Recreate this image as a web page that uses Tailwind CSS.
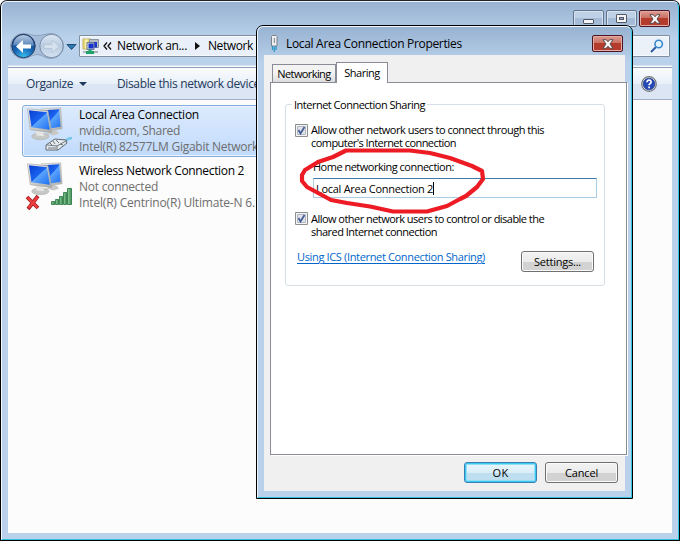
<!DOCTYPE html>
<html lang="en">
<head>
<meta charset="utf-8">
<title>Network Connections</title>
<script src="https://cdn.jsdelivr.net/npm/@tailwindcss/browser@4"></script>
</head>
<body class="w-[681px] h-[544px] overflow-hidden bg-white relative whitespace-nowrap font-['Open_Sans','Noto_Sans',sans-serif] text-[12px] leading-4 text-black">

<svg class="absolute w-0 h-0">
  <defs>
    <linearGradient id="scr" x1="0" y1="0" x2="1" y2="1"><stop offset="0" stop-color="#0a3fd0"/><stop offset=".48" stop-color="#1a63f0"/><stop offset=".5" stop-color="#5aa4fb"/><stop offset="1" stop-color="#1f6ff2"/></linearGradient>
    <linearGradient id="bezel" x1="0" y1="0" x2="1" y2="1"><stop offset="0" stop-color="#f5f5f3"/><stop offset="1" stop-color="#a9aba8"/></linearGradient>
    <radialGradient id="back" cx=".5" cy="1" r=".9"><stop offset="0" stop-color="#3cc5f5"/><stop offset=".5" stop-color="#1766b4"/><stop offset="1" stop-color="#153f86"/></radialGradient>
    <linearGradient id="gloss" x1="0" y1="0" x2="0" y2="1"><stop offset="0" stop-color="#d5e2f1"/><stop offset="1" stop-color="#5d87bd"/></linearGradient>
    <linearGradient id="fwd" x1="0" y1="0" x2="0" y2="1"><stop offset="0" stop-color="#dce7f3"/><stop offset=".5" stop-color="#b9cbe0"/><stop offset="1" stop-color="#d5e4f3"/></linearGradient>
    <linearGradient id="bar" x1="0" y1="0" x2="1" y2="0"><stop offset="0" stop-color="#8fce9d"/><stop offset="1" stop-color="#3d9152"/></linearGradient>
    <symbol id="monitors" viewBox="0 0 40 34">
      <path d="M27 23l4 1 3 3-6 2-8-2z" fill="#c9cac8"/>
      <path d="M15 1L35.500 0 37 22 19 25z" fill="url(#bezel)" stroke="#b0b2b0" stroke-width=".6"/>
      <path d="M17 2.500L34 1.500 35.300 20 20 22.500z" fill="url(#scr)"/>
      <ellipse cx="14" cy="30" rx="9" ry="3.500" fill="#c6c8c6" stroke="#aaaca9" stroke-width=".6"/>
      <path d="M9 24l8 1 1 5-8-1z" fill="#e5e5e3"/>
      <path d="M0.500 1L22 3 26 26 3.500 23z" fill="url(#bezel)" stroke="#a5a7a5" stroke-width=".7"/>
      <path d="M2 2.500L21 4.500 24 23 4.700 20.500z" fill="url(#scr)"/>
    </symbol>
    <symbol id="close" viewBox="0 0 12 10">
      <path d="M1 .7h3.200L6 2.800 7.800.700H11L8 5l3 4.300H7.800L6 7.200 4.200 9.300H1L4 5z" fill="#f7f7f7" stroke="#5b4a50" stroke-width="1"/>
    </symbol>
    <symbol id="check" viewBox="0 0 13 13">
      <path d="M.5.500h12v12H.5z" fill="#f4f4f4" stroke="#8e8f8f"/><path d="M2.500 2.500h8v8h-8z" fill="#dfe3e9" stroke="#b3bac3"/><path d="M3.500 6l2 3.500L9.500 3" fill="none" stroke="#4a5f97" stroke-width="1.800"/>
    </symbol>
  </defs>
</svg>

<!-- Explorer window -->
<div class="w-[680px] h-[541px] border border-t-[#20242a] border-black rounded-t-[7px] bg-[#b9d1ea] overflow-hidden">
  <div class="w-full h-full border border-t-[#eef4fa] border-l-[#f5fafd] border-r-[#2fc8e8] border-b-[#2fc0dc] rounded-t-[6px] bg-linear-to-b from-[#98b2d2] to-[#b9d1ea] to-[36px] flex flex-col pl-[6px] pr-[6px] pb-[6px]">
    <!-- caption buttons -->
    <div class="flex justify-end h-[31px] pt-[8px] pr-[2px] gap-[2px] shrink-0">
      <div class="w-[31px] h-[17px] rounded-[2px] border border-[#62758c] shadow-[inset_0_0_0_1px_#d5e2f0] bg-linear-to-b from-[#bfd1e5] from-50% to-[#a4bcd8] to-50% flex justify-center pt-[8px]"><span class="block w-[11px] h-[5px] rounded-[1px] border border-[#535766] bg-[#f4f4f4]"></span></div>
      <div class="w-[31px] h-[17px] rounded-[2px] border border-[#62758c] shadow-[inset_0_0_0_1px_#d5e2f0] bg-linear-to-b from-[#bfd1e5] from-50% to-[#a4bcd8] to-50% flex justify-center pt-[3px]"><span class="w-[11px] h-[9px] rounded-[1px] border border-[#535766] bg-[#f4f4f4] flex items-center justify-center"><i class="block w-[5px] h-[3px] border border-[#535766] bg-[#8da8c6]"></i></span></div>
      <div class="w-[31px] h-[17px] rounded-[2px] border border-[#4b1523] shadow-[inset_0_0_0_1px_#e5aca5] bg-linear-to-b from-[#dc9b91] from-0% via-[#ca7264] via-45% to-[#b33c2c] to-50% flex justify-center items-center"><svg class="w-[12px] h-[10px]"><use href="#close"/></svg></div>
    </div>
    <!-- navigation row -->
    <div class="flex h-[32px] shrink-0">
      <svg class="w-[71px] h-[30px] shrink-0" viewBox="8 33 71 30">
        <path d="M23 33.500c5 0 8 2 14 2s9-2 14-2a12.500 12.500 0 0 1 0 25c-6 0-9-4-14-4s-8 4-14 4a12.500 12.500 0 0 1 0-25z" fill="#a5bdd9" stroke="#8ba3c0" stroke-width="1"/>
        <circle cx="23.500" cy="46" r="11.700" fill="url(#back)" stroke="#293f62" stroke-width="1"/>
        <path d="M13 45.500a10.500 10.500 0 0 1 21 0c-6 2-14-2-21 0z" fill="url(#gloss)" opacity=".85"/>
        <path d="M16 46.500l7-6.500v4.500h8v4h-8V53z" fill="#fff"/>
        <circle cx="51.500" cy="46" r="11.700" fill="url(#fwd)" stroke="#788ca6" stroke-width="1"/>
        <path d="M59 46.500l-7-6.500v4.500h-8v4h8V53z" fill="#d5e1ed" stroke="#b4c5d8" stroke-width=".8"/>
        <path d="M67 44.500h9l-4.500 5z" fill="#2e7cb4" stroke="#1d4b78" stroke-width="1"/>
      </svg>
      <div class="w-[540px] h-[22px] mt-[2px] border border-[#828f9f] rounded-[1px] bg-[#e9f0f9] shadow-[inset_0_0_0_1px_#f6f9fd] flex items-center">
        <svg class="w-[17px] h-[17px] ml-[2px] shrink-0" viewBox="0 0 17 17">
          <path d="M1 1h8v10H1z" fill="#e7d778" stroke="#c6b863" stroke-width="1"/><path d="M3 1.500h3v9H3z" fill="#f8f0a5"/>
          <path d="M7.500 1.500h9v8h-9z" fill="#b8bec6" stroke="#8a929c"/><path d="M9 4h6v5.500H9z" fill="#1d36cf"/>
          <path d="M5 4.500h7v7H5z" fill="#dce2e9" stroke="#69758c"/><path d="M6.500 5.500h5v5h-5z" fill="#1530cb"/><path d="M6 13h10v2H6z" fill="#c5c9ce"/>
          <path d="M1 14h15" stroke="#a3a8a8" stroke-width="1.500"/><path d="M8 11.500v3M4 14.500h8" stroke="#1fa16c" stroke-width="3"/>
        </svg>
        <svg class="w-[9px] h-[8px] ml-[4px] mt-[-1px] shrink-0" viewBox="0 0 9 8"><path d="M4 .5L1 4l3 3.500M8 .5L5 4l3 3.500" fill="none" stroke="#111" stroke-width="1.300"/></svg>
        <span class="ml-[5px] tracking-[-0.34px]">Network an...</span>
        <svg class="w-[5px] h-[8px] ml-[8px] shrink-0" viewBox="0 0 5 8"><path d="M0 0l5 4-5 4z" fill="#111"/></svg>
        <span class="ml-[8px] tracking-[-0.4px]">Network</span>
      </div>
      <div class="w-[51px] h-[22px] mt-[2px] border border-[#828f9f] rounded-[1px] bg-[#eaf1f9] shadow-[inset_0_0_0_1px_#f6f9fd] flex justify-end items-center pr-[5px]">
        <svg class="w-[14px] h-[14px]" viewBox="0 0 14 14"><path d="M1 13l5-5" stroke="#2d5c9e" stroke-width="2"/><circle cx="8.700" cy="5" r="3.700" fill="#e3f3fd" stroke="#3c86cc" stroke-width="1.600"/></svg>
      </div>
    </div>
    <!-- body -->
    <div class="flex-1 min-h-0 bg-[#fcfcfc] flex flex-col border-t border-[#d5e2f0]">
      <div class="h-[33px] shrink-0 border-y border-t-[#8d9eb6] border-b-[#a0b0c8] mt-px bg-linear-to-b from-[#fafcfe] from-0% via-[#e9f0f9] via-50% to-[#dbe5f3] to-52% flex items-center text-[#1e395b] pl-[18px] pr-[15px]">
        <span class="tracking-[-0.4px]">Organize</span>
        <svg class="w-[8px] h-[4px] ml-[6px] shrink-0" viewBox="0 0 8 4"><path d="M0 0h8L4 4z" fill="#1e395b"/></svg>
        <span class="ml-[30px] tracking-[-0.36px]">Disable this network device</span>
        <svg class="w-[16px] h-[16px] ml-auto shrink-0" viewBox="0 0 16 16"><circle cx="8" cy="8" r="7.300" fill="#dfe1e6" stroke="#74777f" stroke-width="1.200"/><circle cx="8" cy="8" r="5.800" fill="#2549b5" stroke="#132b78" stroke-width=".6"/><path d="M5.900 6.300c.1-3 4.400-2.600 4.200-.1-.1 1.500-2 1.500-2 3.100M8.100 10.500v1.800" fill="none" stroke="#fff" stroke-width="1.700"/></svg>
      </div>
      <div class="flex flex-col pl-[14px] pt-[5px]">
        <div class="w-[300px] h-[52px] border border-[#84acdd] rounded-[3px] bg-linear-to-b from-[#dceafc] to-[#c1dbfc] shadow-[inset_0_0_0_1px_#e9f2fd] flex">
          <svg class="w-[48px] h-[48px] ml-[3px] mt-[1px] shrink-0" viewBox="26 107 48 48">
            <use href="#monitors" x="27" y="107" width="38" height="34"/>
            <path d="M64 141c3 0 3-3 8-3" stroke="#75c8e7" stroke-width="2.500" fill="none"/>
            <path d="M46 145l9-6 11 1 1 3-9 7-12 0z" fill="#e6eaec" stroke="#5f6a72" stroke-width="1"/>
            <path d="M47 145l10 1 9-5M57 146v4M50 143l2 2M53 141l2 3M56 140l3 3M48 148h8M60 144l3 1" stroke="#6d7981" stroke-width="1" fill="none"/>
          </svg>
          <div class="ml-[5px] mt-px text-[#6d6d6d]">
            <div class="text-black tracking-[-0.235px]">Local Area Connection</div>
            <div class="tracking-[-0.3px]">nvidia.com, Shared</div>
            <div class="tracking-[-0.26px]">Intel(R) 82577LM Gigabit Network</div>
          </div>
        </div>
        <div class="h-[56px] pt-[5px] flex">
          <svg class="w-[49px] h-[50px] ml-[3px] shrink-0" viewBox="25 163 49 50">
            <use href="#monitors" x="27" y="163" width="38" height="34"/>
            <path d="M27 198l11 11M38 197L28 210" stroke="#a41b22" stroke-width="3.800"/><path d="M27.500 198.500l10 10M37.500 198L28.500 209" stroke="#ee3e3e" stroke-width="2.300"/>
            <g fill="url(#bar)" stroke="#337c49" stroke-width=".9"><path d="M51.500 202.500h3v3h-3z"/><path d="M55.500 200.500h3v5h-3z"/><path d="M59.500 197.500h3v8h-3z"/><path d="M63.500 193.500h3v12h-3z"/><path d="M67.500 189.500h4v16h-4z"/></g>
          </svg>
          <div class="ml-[5px] mt-px text-[#6d6d6d]">
            <div class="text-black tracking-[-0.34px]">Wireless Network Connection 2</div>
            <div class="tracking-[-0.245px]">Not connected</div>
            <div class="tracking-[-0.19px]">Intel(R) Centrino(R) Ultimate-N 6.</div>
          </div>
        </div>
      </div>
    </div>
  </div>
</div>

<!-- Properties dialog -->
<div class="absolute left-[256px] top-[25px] w-[377px] h-[474px] border border-black rounded-t-[7px] bg-[#b9d1ea] overflow-hidden">
  <div class="w-full h-full border border-[#f0f7fc] border-r-[#2fc8e8] border-b-[#2fc0dc] rounded-t-[6px] bg-linear-to-b from-[#98b2d2] to-[#b9d1ea] to-[36px] flex flex-col px-[6px] pb-[6px]">
    <div class="flex h-[28px] shrink-0 pl-[6px] pr-[2px]">
      <svg class="w-[8px] h-[17px] mt-[8px] shrink-0" viewBox="0 0 8 17"><path d="M1.500 1.500L2.500.5h3.500l1 1V11H1.500z" fill="#eef0f1" stroke="#7a8087"/><path d="M4.300 3v5" stroke="#777f88"/><path d="M2.500 11v4M6 11v4M4.300 12v5" stroke="#2196c8" stroke-width="1.200"/></svg>
      <span class="ml-[8px] mt-[9px] tracking-[-0.32px]">Local Area Connection Properties</span>
      <div class="w-[31px] h-[17px] mt-[8px] ml-auto rounded-[2px] border border-[#4b1523] shadow-[inset_0_0_0_1px_#e5aca5] bg-linear-to-b from-[#dc9b91] from-0% via-[#ca7264] via-45% to-[#b33c2c] to-50% flex justify-center items-center"><svg class="w-[12px] h-[10px]"><use href="#close"/></svg></div>
    </div>
    <div class="flex-1 min-h-0 bg-[#f0f0f0] flex flex-col px-[6px] text-[11px] leading-[13px] tracking-[-0.5px]">
      <div class="flex items-end h-[28px] pt-[7px] pl-[2px] shrink-0 relative z-10">
        <div class="w-[64px] h-[18px] mb-px border border-b-0 border-[#898c95] bg-linear-to-b from-[#f3f3f3] from-50% to-[#dcdcdc] flex justify-center pt-[2px] tracking-[-0.6px]">Networking</div>
        <div class="w-[52px] h-[21px] border border-b-0 border-[#898c95] bg-white flex justify-center pt-[3px]">Sharing</div>
      </div>
      <div class="w-[357px] h-[373px] -mt-px border border-[#898c95] bg-white shadow-[1px_1px_0_#fff] shrink-0 px-[14px] pt-[21px] self-start">
        <div class="w-[320px] h-[182px] border border-[#d5dfe5] rounded-[3px] flex flex-col">
          <div class="-mt-[7px] h-[13px] flex pl-[6px]"><span class="bg-white px-[2px]">Internet Connection Sharing</span></div>
          <div class="flex pl-[9px] mt-[12px]">
            <svg class="w-[13px] h-[13px] mt-px shrink-0"><use href="#check"/></svg>
            <div class="ml-[3px]"><div class="tracking-[-0.49px]">Allow other network users to connect through this</div><div class="tracking-[-0.555px]">computer's Internet connection</div></div>
          </div>
          <div class="pl-[27px] mt-[11px]">Home networking connection:</div>
          <div class="ml-[27px] mt-[5px] w-[284px] h-[20px] border border-[#a9cbe4] border-t-[#3d7bad] rounded-[1px] flex items-center pl-[2px] bg-white shrink-0 tracking-[-0.29px]">Local Area Connection 2<i class="block w-px h-[13px] bg-black"></i></div>
          <div class="flex pl-[9px] mt-[14px]">
            <svg class="w-[13px] h-[13px] shrink-0"><use href="#check"/></svg>
            <div class="ml-[3px]"><div class="tracking-[-0.53px]">Allow other network users to control or disable the</div><div class="tracking-[-0.515px]">shared Internet connection</div></div>
          </div>
          <div class="flex pl-[11px] mt-[12px]">
            <span class="text-[#0066cc] underline underline-offset-2 tracking-[-0.343px]">Using ICS (Internet Connection Sharing)</span>
            <div class="ml-auto mr-[10px] mt-px w-[73px] h-[21px] border border-[#707070] rounded-[3px] shadow-[inset_0_0_0_1px_#fafafa] bg-linear-to-b from-[#f2f2f2] from-0% via-[#ebebeb] via-50% to-[#d2d2d2] to-55% flex justify-center items-center tracking-[-0.22px]">Settings...</div>
          </div>
        </div>
      </div>
      <div class="flex justify-end gap-[8px] mt-[7px] pr-px tracking-[-0.17px]">
        <div class="w-[73px] h-[21px] border border-[#3c7fb1] rounded-[3px] shadow-[inset_0_0_0_1px_#3cc8f0,inset_0_0_0_2px_#8de0f8] bg-linear-to-b from-[#eaf6fd] from-0% via-[#daeef9] via-50% to-[#bfdff1] to-55% flex justify-center items-center"><span class="tracking-[0.3px]">OK</span></div>
        <div class="w-[73px] h-[21px] border border-[#707070] rounded-[3px] shadow-[inset_0_0_0_1px_#fafafa] bg-linear-to-b from-[#f2f2f2] from-0% via-[#ebebeb] via-50% to-[#d2d2d2] to-55% flex justify-center items-center">Cancel</div>
      </div>
    </div>
  </div>
</div>

<!-- hand-drawn marker -->
<svg class="absolute left-[296px] top-[144px] w-[192px] h-[72px]" viewBox="296 144 192 72" fill="none" stroke="#ed1c24" stroke-width="4.200" stroke-linejoin="round" stroke-linecap="round">
  <path d="M482 171L472 166 450 158 430 153 410 150.500 346 150.500 333 157 318 162 305 170 302 175 302 181 307 187 320 194 331 200 347 203 370 206.500 393 211.500 427 211.500 447 206 460 199 466 196 477 187 483 179z"/>
</svg>
</body>
</html>
